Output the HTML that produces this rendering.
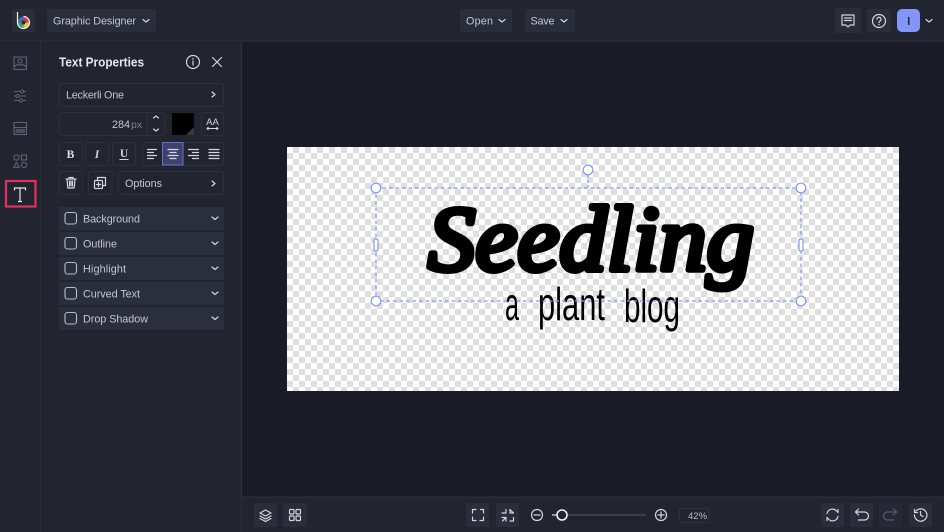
<!DOCTYPE html>
<html lang="en"><head><meta charset="utf-8"><title>Graphic Designer</title>
<style>
html,body{margin:0;padding:0;background:#1a1b26;width:944px;height:532px;overflow:hidden}
svg{display:block;filter:blur(.3px)}
text{font-family:"Liberation Sans",sans-serif}
.lbl{font-size:10.8px;fill:#c4c7d1}
.btn{fill:#2a2d3a}
.box{fill:#22242f;stroke:#2c2f3c;stroke-width:1}
.ic{fill:none;stroke:#d4d6de;stroke-width:1.2;stroke-linecap:round;stroke-linejoin:round}
.dim{fill:none;stroke:#555a70;stroke-width:1.2;stroke-linecap:round;stroke-linejoin:round}
.rail{fill:none;stroke:#5d6277;stroke-width:1.1}
.row{fill:#2b2e3c}
.cb{fill:none;stroke:#b9bcc8;stroke-width:1.1}
</style></head><body>
<svg width="944" height="532" viewBox="0 0 944 532" xmlns="http://www.w3.org/2000/svg">
<defs>
<pattern id="ck" x="287" y="147" width="12" height="12" patternUnits="userSpaceOnUse">
<rect width="12" height="12" fill="#fff"/><rect x="6" width="6" height="6" fill="#dfdfdf"/><rect y="6" width="6" height="6" fill="#dfdfdf"/>
</pattern>
</defs>
<rect width="944" height="532" fill="#1a1b26"/>
<!-- top bar -->
<rect width="944" height="41" fill="#22242f"/><rect y="40.5" width="944" height="1" fill="#2d303c"/>
<!-- left rail and panel -->
<rect y="41" width="241" height="491" fill="#22242f"/>
<rect x="40" y="41" width="1" height="491" fill="#2b2e3a"/>
<rect x="241" y="41" width="1" height="491" fill="#2d303c"/>
<!-- bottom bar -->
<rect x="242" y="497" width="702" height="35" fill="#22242f"/><rect x="242" y="496.5" width="702" height="1" fill="#2d303c"/>

<!-- logo -->
<rect x="12" y="9" width="23" height="23" rx="2" class="btn"/>
<circle cx="23.5" cy="22.5" r="5.8" fill="#e8a33a"/>
<path d="M23.5 22.5V16.7A5.8 5.8 0 0 1 29.3 22.5Z" fill="#d23a4c"/>
<path d="M23.5 22.5L29.3 22.5A5.8 5.8 0 0 1 23.5 28.3Z" fill="#e6c23a"/>
<path d="M23.5 22.5L23.5 28.3A5.8 5.8 0 0 1 17.7 22.5Z" fill="#3fa35c"/>
<path d="M23.5 22.5L17.7 22.5A5.8 5.8 0 0 1 23.5 16.7Z" fill="#3a6fc2"/>
<circle cx="23.5" cy="22.5" r="2" fill="#2a2d3a"/>
<path d="M17.5 12V22.5A6 6 0 1 0 23.5 16.5" fill="none" stroke="#f1f1f3" stroke-width="1.2"/>

<!-- top buttons -->
<rect x="47" y="9" width="109" height="23" rx="2" class="btn"/>
<text x="53" y="24.5" class="lbl" textLength="83">Graphic Designer</text>
<path d="M143 19.500l3 2.500 3-2.500" class="ic"/>
<rect x="460" y="9" width="52" height="23" rx="2" class="btn"/>
<text x="466" y="24.5" class="lbl" textLength="27">Open</text>
<path d="M499 19.5l3 2.5 3-2.5" class="ic"/>
<rect x="525" y="9" width="50" height="23" rx="2" class="btn"/>
<text x="530.500" y="24.5" class="lbl" textLength="24">Save</text>
<path d="M561 19.500l3 2.500 3-2.500" class="ic"/>
<rect x="835" y="8" width="26" height="25" rx="2" class="btn"/>
<path d="M842 15h12v10h-4l-2 2-2-2h-4zM844.500 18h7M844.500 20.500h7" class="ic"/>
<rect x="867" y="9" width="24" height="23" rx="2" class="btn"/>
<circle cx="879" cy="21" r="6.500" class="ic"/>
<path d="M877 19.300a2 2 0 1 1 3 1.700c-.7.400-1 .8-1 1.500" class="ic"/><circle cx="879" cy="24.500" r=".7" fill="#d4d6de"/>
<rect x="897" y="9" width="23" height="23" rx="5" fill="#8296fa"/>
<rect x="908" y="17" width="1.500" height="8" fill="#1e2130"/>
<path d="M926 19.500l3 2.500 3-2.500" class="ic"/>

<!-- rail icons -->
<rect x="14" y="57" width="12.500" height="12.500" class="rail"/><circle cx="20" cy="61" r="2" class="rail"/><path d="M14 67l4-3 2.500 1.500 2-1.500 4 3" class="rail"/>
<path d="M14 91.500h12M14 96h12M14 100.500h12" class="rail"/><circle cx="22" cy="91.500" r="1.600" fill="#22242f" stroke="#5d6277"/><circle cx="17.500" cy="96" r="1.600" fill="#22242f" stroke="#5d6277"/><circle cx="21" cy="100.500" r="1.600" fill="#22242f" stroke="#5d6277"/>
<rect x="14" y="122.500" width="12.500" height="12" class="rail"/><path d="M14 127.500h12.500" class="rail"/><rect x="15.500" y="129" width="9.500" height="4" fill="#4c5063"/>
<rect x="21.500" y="155" width="5" height="5" class="rail"/><circle cx="16.500" cy="157.500" r="2.600" class="rail"/><path d="M16.500 162.500l2.800 4.800h-5.600z" class="rail"/><circle cx="24" cy="165" r="2.600" class="rail"/>
<rect x="6" y="181" width="29.500" height="25.500" fill="none" stroke="#e0315f" stroke-width="2.200"/>
<path d="M14.500 190.500v-2.500h11v2.500M20 188v13.500M18 201.500h4" fill="none" stroke="#e4e5ea" stroke-width="1.200"/>

<!-- Text Properties -->
<text x="59" y="66.500" font-size="12.500" font-weight="700" fill="#e6e7ec" textLength="85" lengthAdjust="spacingAndGlyphs">Text Properties</text>
<circle cx="193" cy="62" r="6.500" class="ic"/><path d="M193 61v4" class="ic"/><circle cx="193" cy="58.800" r=".8" fill="#d4d6de"/>
<path d="M212.500 57.500l9 9M221.500 57.500l-9 9" class="ic"/>

<rect x="59.500" y="83.500" width="164" height="23" rx="2" class="box"/>
<text x="66" y="98.500" class="lbl" textLength="58">Leckerli One</text>
<path d="M212 92l3 2.500-3 2.500" class="ic"/>

<rect x="59.500" y="112.500" width="105" height="23" rx="2" class="box"/>
<rect x="147" y="113" width="1" height="22" fill="#2c2f3c"/>
<text x="112" y="128" class="lbl">284</text><text x="131" y="128" font-size="10.500" fill="#7d8193">px</text>
<path d="M153.500 118l2.500-2 2.500 2M153.500 129l2.500 2 2.500-2" class="ic"/>
<rect x="172" y="113" width="22" height="22" rx="1" fill="#000"/><path d="M194 135h-8l8-8z" fill="#3a3a3a"/>
<rect x="201.500" y="112.500" width="22" height="23" rx="2" class="box"/>
<text x="212.500" y="125" font-size="9.500" fill="#d4d6de" text-anchor="middle">AA</text>
<path d="M207 128.500h11M208.500 127l-1.500 1.500 1.500 1.500M216.500 127l1.500 1.500-1.500 1.500" fill="none" stroke="#d4d6de"/>

<rect x="59.500" y="142.500" width="22.500" height="23" rx="2" class="box"/>
<text x="70.500" y="158" font-size="11.500" font-weight="700" fill="#e0e1e7" text-anchor="middle" style="font-family:'Liberation Serif',serif">B</text>
<rect x="85.500" y="142.500" width="23" height="23" rx="2" class="box"/>
<text x="97" y="158" font-size="11.500" font-style="italic" font-weight="700" fill="#d4d6de" text-anchor="middle" style="font-family:'Liberation Serif',serif">I</text>
<rect x="112.500" y="142.500" width="23" height="23" rx="2" class="box"/>
<text x="124" y="157" font-size="11.500" font-weight="700" fill="#d4d6de" text-anchor="middle" style="font-family:'Liberation Serif',serif">U</text><path d="M119.500 159.500h9" stroke="#d4d6de"/>
<rect x="142.500" y="142.500" width="81" height="23" rx="2" class="box"/>
<path d="M147.500 149.500h9M147.500 152.500h6M147.500 155.500h9M147.500 158.500h6" class="ic" stroke-width="1"/>
<rect x="162.500" y="142.500" width="20.500" height="22.500" fill="#3f4270" stroke="#6a72c8"/>
<path d="M168 149.500h10M170 152.500h6M168 155.500h10M170 158.500h6" class="ic" stroke-width="1"/>
<path d="M188.500 149.500h10M192.500 152.500h6M188.500 155.500h10M192.500 158.500h6" class="ic" stroke-width="1"/>
<path d="M209 149.500h10M209 152.500h10M209 155.500h10M209 158.500h10" class="ic" stroke-width="1"/>

<rect x="59.500" y="171.500" width="22.500" height="23" rx="2" class="box"/>
<path d="M66 179h10M69 179v-1.500h4v1.500M67 179l.8 9h6.400l.8-9M69.500 181v5M71 181v5M72.500 181v5" class="ic" stroke-width="1"/>
<rect x="88.500" y="171.500" width="23.500" height="23" rx="2" class="box"/>
<rect x="94.500" y="180.500" width="8" height="8" rx="1" class="ic"/><path d="M97.500 180.500v-3h8v8h-3M98.500 182.500v4M96.500 184.500h4" class="ic"/>
<rect x="118.500" y="171.500" width="105" height="23" rx="2" class="box"/>
<text x="125" y="187" class="lbl" textLength="37">Options</text>
<path d="M212 181l3 2.500-3 2.500" class="ic"/>

<!-- accordion rows -->
<rect x="59" y="207" width="165" height="23" rx="1" class="row"/>
<rect x="65" y="212.500" width="11.500" height="11.500" rx="2.500" class="cb"/>
<text x="83" y="222.500" class="lbl" textLength="57">Background</text><path d="M212 217l3 2.500 3-2.500" class="ic"/>
<rect x="59" y="232" width="165" height="23" rx="1" class="row"/>
<rect x="65" y="237.500" width="11.500" height="11.500" rx="2.500" class="cb"/>
<text x="83" y="247.500" class="lbl" textLength="34">Outline</text><path d="M212 242l3 2.500 3-2.500" class="ic"/>
<rect x="59" y="257" width="165" height="23" rx="1" class="row"/>
<rect x="65" y="262.500" width="11.500" height="11.500" rx="2.500" class="cb"/>
<text x="83" y="272.500" class="lbl" textLength="43">Highlight</text><path d="M212 267l3 2.500 3-2.500" class="ic"/>
<rect x="59" y="282" width="165" height="23" rx="1" class="row"/>
<rect x="65" y="287.500" width="11.500" height="11.500" rx="2.500" class="cb"/>
<text x="83" y="297.500" class="lbl" textLength="57">Curved Text</text><path d="M212 292l3 2.500 3-2.500" class="ic"/>
<rect x="59" y="307" width="165" height="23" rx="1" class="row"/>
<rect x="65" y="312.500" width="11.500" height="11.500" rx="2.500" class="cb"/>
<text x="83" y="322.500" class="lbl" textLength="65">Drop Shadow</text><path d="M212 317l3 2.500 3-2.500" class="ic"/>

<!-- canvas -->
<rect x="287" y="147" width="612" height="244" fill="url(#ck)"/>
<text x="428" y="270" font-size="92" font-style="italic" fill="#000" stroke="#000" stroke-width="6" stroke-linejoin="round" stroke-linecap="round" textLength="326" lengthAdjust="spacingAndGlyphs" style="font-family:'Liberation Serif',serif">Seedling</text>
<g fill="#000" style="font-family:'Liberation Sans',sans-serif" font-size="46">
<text x="505" y="320" textLength="14" lengthAdjust="spacingAndGlyphs">a</text>
<text x="538" y="320" textLength="67" lengthAdjust="spacingAndGlyphs">plant</text>
<text x="624" y="322" textLength="56" lengthAdjust="spacingAndGlyphs">blog</text>
</g>

<!-- selection -->
<rect x="376" y="188" width="425" height="113" fill="none" stroke="#8296fa" stroke-width="1.200" stroke-dasharray="3.500 3"/>
<path d="M588 175v13" stroke="#8296fa" stroke-width="1.200" stroke-dasharray="3 2"/>
<g fill="#fff" stroke="#8296fa" stroke-width="1.200">
<circle cx="588" cy="170" r="4.800"/>
<circle cx="376" cy="188" r="4.800"/><circle cx="801" cy="188" r="4.800"/>
<circle cx="376" cy="301" r="4.800"/><circle cx="801" cy="301" r="4.800"/>
<rect x="374" y="239" width="4" height="12" rx="1.500"/><rect x="799" y="239" width="4" height="12" rx="1.500"/>
</g>

<!-- bottom bar -->
<rect x="254" y="503" width="23" height="24" rx="2" class="btn"/>
<path d="M265.500 510l5.500 3-5.500 3-5.500-3zM260 516l5.500 3 5.500-3M260 518.500l5.500 3 5.500-3" class="ic" stroke-width="1"/>
<rect x="283" y="503" width="24" height="24" rx="2" class="btn"/>
<g class="ic"><rect x="289.500" y="509.500" width="4.500" height="4.500" rx="1"/><rect x="296" y="509.500" width="4.500" height="4.500" rx="1"/><rect x="289.500" y="516" width="4.500" height="4.500" rx="1"/><rect x="296" y="516" width="4.500" height="4.500" rx="1"/></g>
<rect x="466" y="503" width="23" height="24" rx="2" class="btn"/>
<path d="M472.500 513v-3.500h3.500M480.500 509.500h3v3.500M483.500 517v3.500h-3.500M476 520.500h-3.500V517" class="ic" stroke-width="1.300"/>
<rect x="496" y="503" width="23" height="24" rx="2" class="btn"/>
<path d="M502 513h4v-3.500M513.500 513l-3.500-3.500M510 513h3.500M510 513v-3.500M502 517.500h4v3.500M506 517.500l-3.500 3.500M510 521h3.500v-3.500" class="ic"/>
<circle cx="537" cy="515" r="5.500" class="ic"/><path d="M534 515h6" class="ic"/>
<path d="M552 515h6" stroke="#e4e5ea" stroke-width="1.200"/><path d="M567 515h79" stroke="#4a4e5e" stroke-width="1.200"/>
<circle cx="562" cy="515" r="5" fill="#22242f" stroke="#f0f0f4" stroke-width="1.600"/>
<circle cx="661" cy="515" r="5.500" class="ic"/><path d="M658 515h6M661 512v6" class="ic"/>
<rect x="679.500" y="508.500" width="29" height="14" rx="1" class="box"/>
<text x="688" y="519" font-size="9.500" fill="#b9bcc8">42%</text>

<rect x="821" y="503" width="23" height="24" rx="2" class="btn"/>
<path d="M827 513.500a5.500 5.500 0 0 1 9.500-2.500l1.500 1.500v-3M838 516.500a5.500 5.500 0 0 1-9.500 2.500l-1.500-1.500v3" class="ic" stroke-width="1.300"/>
<rect x="850" y="503" width="23" height="24" rx="2" class="btn"/>
<path d="M858.500 509l-3 3 3 3M855.500 512h9a3.500 3.500 0 0 1 0 8h-6" class="ic"/>
<rect x="879" y="503" width="23" height="24" rx="2" fill="#262835"/>
<path d="M893.500 509l3 3-3 3M896.500 512h-9a3.500 3.500 0 0 0 0 8h6" class="dim"/>
<rect x="909" y="503" width="23" height="24" rx="2" class="btn"/>
<path d="M916 511a6.200 6.200 0 1 1-1.500 4M914.500 509.500v3h3M920.500 511.500v3.500l2.500 1.500" class="ic" stroke-width="1.300"/>
</svg>
</body></html>
